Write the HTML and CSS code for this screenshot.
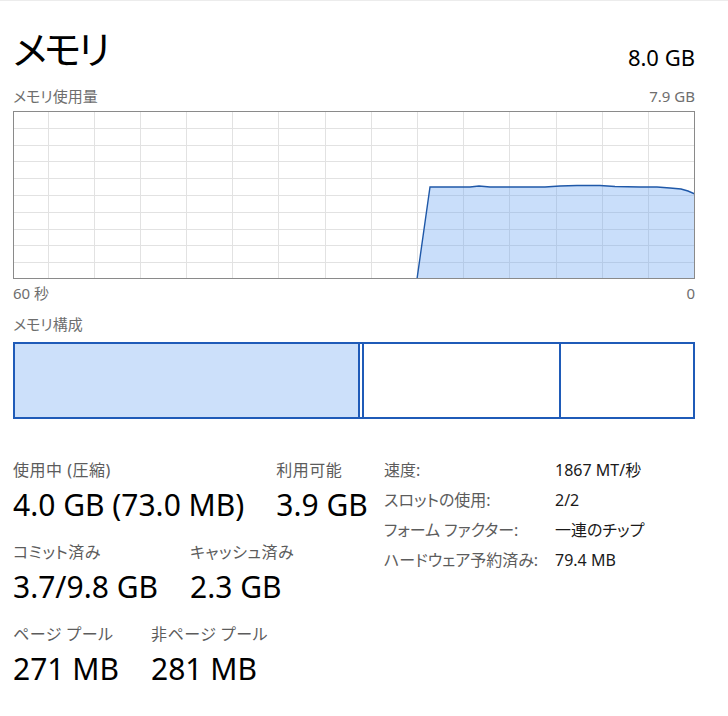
FILE: index.html
```html
<!DOCTYPE html>
<html lang="ja">
<head>
<meta charset="utf-8">
<title>メモリ</title>
<link rel="stylesheet" href="styles.css">
</head>
<body>
<div class="page">
  <div class="header">
    <div class="title">メモリ</div>
    <div class="total">8.0 GB</div>
  </div>
  <div class="caption-row usage">
    <span class="jp">メモリ使用量</span>
    <span>7.9 GB</span>
  </div>
  <svg class="graph" width="682" height="168" viewBox="0 0 682 168">
    <path class="grid" d="M35.5 0V168M81.5 0V168M127.5 0V168M173.5 0V168M219.5 0V168M265.5 0V168M312.5 0V168M358.5 0V168M404.5 0V168M450.5 0V168M496.5 0V168M543.5 0V168M589.5 0V168M635.5 0V168M0 17.5H682M0 34.5H682M0 50.5H682M0 67.5H682M0 84.5H682M0 101.5H682M0 118.5H682M0 134.5H682M0 151.5H682"/>
    <polygon class="area" points="404,168 417,76 457,76 466,75 477,76 532,76 547,75 564,74.5 587,74.5 602,75.5 627,76 644,76 657,77 668,78 675,80 682,83 682,168"/>
    <polyline class="line" points="404,168 417,76 457,76 466,75 477,76 532,76 547,75 564,74.5 587,74.5 602,75.5 627,76 644,76 657,77 668,78 675,80 682,83"/>
    <rect class="frame" x="0.5" y="0.5" width="681" height="167"/>
  </svg>
  <div class="caption-row axis">
    <span>60 秒</span>
    <span>0</span>
  </div>
  <div class="caption jp">メモリ構成</div>
  <div class="composition">
    <div class="seg seg-used" style="width:343px"></div>
    <div class="seg" style="width:2px"></div>
    <div class="seg" style="width:195px"></div>
    <div class="seg seg-free"></div>
  </div>
  <div class="stats">
    <div class="stats-left">
      <div class="stat-row">
        <div class="stat">
          <div class="label">使用中 (圧縮)</div>
          <div class="value">4.0 GB (73.0 MB)</div>
        </div>
        <div class="stat">
          <div class="label">利用可能</div>
          <div class="value">3.9 GB</div>
        </div>
      </div>
      <div class="stat-row">
        <div class="stat">
          <div class="label">コミット済み</div>
          <div class="value">3.7/9.8 GB</div>
        </div>
        <div class="stat">
          <div class="label">キャッシュ済み</div>
          <div class="value">2.3 GB</div>
        </div>
      </div>
      <div class="stat-row">
        <div class="stat">
          <div class="label">ページ プール</div>
          <div class="value">271 MB</div>
        </div>
        <div class="stat">
          <div class="label">非ページ プール</div>
          <div class="value">281 MB</div>
        </div>
      </div>
    </div>
    <div class="info">
      <div class="info-label">速度:</div><div class="info-value">1867 MT/秒</div>
      <div class="info-label">スロットの使用:</div><div class="info-value">2/2</div>
      <div class="info-label">フォーム ファクター:</div><div class="info-value">一連のチップ</div>
      <div class="info-label">ハードウェア予約済み:</div><div class="info-value">79.4 MB</div>
    </div>
  </div>
</div>
</body>
</html>
```
FILE: styles.css
```css
html, body {
  margin: 0;
  padding: 0;
  background: #ffffff;
}
body {
  font-family: "Noto Sans", "Noto Sans CJK JP", sans-serif;
  color: #000;
  border-top: 1px solid #ececec;
}
.page {
  width: 682px;
  padding: 24px 0 0 13px;
}
.jp, .title, .label, .info-label, .info-value {
  font-feature-settings: "palt";
}
.header {
  display: flex;
  justify-content: space-between;
  align-items: baseline;
  height: 48px;
}
.title {
  font-size: 39px;
  line-height: 48px;
  font-weight: 400;
  letter-spacing: -3px;
}
.total {
  font-size: 22px;
  line-height: 48px;
  position: relative;
  top: 2px;
}
.caption-row {
  display: flex;
  justify-content: space-between;
  font-size: 15px;
  line-height: 20px;
  color: #6e6e6e;
}
.caption-row.usage {
  margin-top: 13px;
}
.graph {
  display: block;
  margin-top: 5px;
}
.grid {
  stroke: #e2e2e2;
  stroke-width: 1;
  fill: none;
}
.area {
  fill: rgba(100, 160, 240, 0.35);
  stroke: none;
}
.line {
  fill: none;
  stroke: #1f58a8;
  stroke-width: 1.4;
}
.frame {
  fill: none;
  stroke: #8a8a8a;
  stroke-width: 1;
}
.caption-row.axis {
  margin-top: 4px;
}
.caption {
  font-size: 15px;
  line-height: 20px;
  color: #6e6e6e;
  margin-top: 11px;
}
.composition {
  display: flex;
  height: 73px;
  border: 2px solid #1f5bb8;
  margin-top: 8px;
}
.seg {
  border-right: 2px solid #1f5bb8;
  flex: none;
}
.seg-used {
  background: #cce0fa;
}
.seg.seg-free {
  flex: 1;
  border-right: none;
}
.stats {
  display: grid;
  grid-template-columns: 371px 1fr;
  align-items: start;
  margin-top: 36px;
}
.stats-left {
  padding-top: 5px;
}
.stat-row {
  display: flex;
  gap: 32px;
  margin-bottom: 19px;
}
.label {
  font-size: 16px;
  line-height: 20px;
  color: #5c5c5c;
  letter-spacing: 0.5px;
}
.value {
  font-size: 30px;
  line-height: 36px;
  margin-top: 7px;
  color: #000;
  white-space: nowrap;
}
.info {
  display: grid;
  grid-template-columns: 171px auto;
  align-content: start;
  font-size: 16px;
  line-height: 30px;
}
.info-label {
  color: #5c5c5c;
}
.info-value {
  color: #1a1a1a;
}
```
